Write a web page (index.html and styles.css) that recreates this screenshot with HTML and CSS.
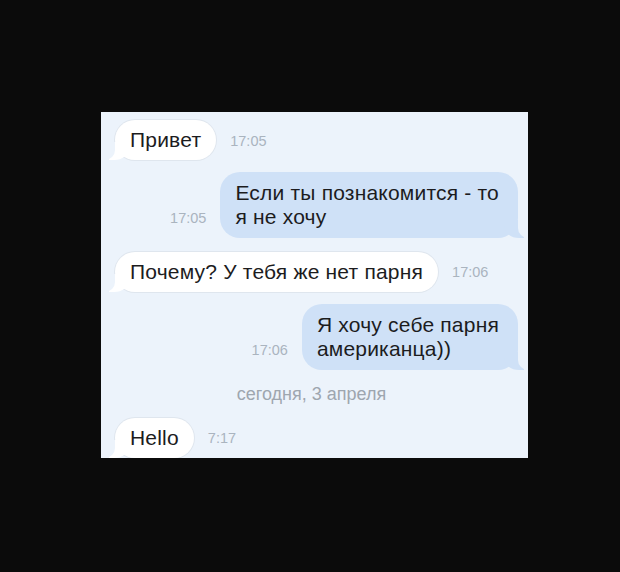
FILE: index.html
```html
<!DOCTYPE html>
<html lang="ru">
<head>
<meta charset="utf-8">
<link rel="stylesheet" href="styles.css">
</head>
<body>
<div class="stage">
  <div class="chat">
    <div class="row row-in r1">
      <div class="bubble in">Привет</div>
      <span class="time">17:05</span>
    </div>
    <div class="row row-out r2">
      <span class="time">17:05</span>
      <div class="bubble out">Если ты познакомится - то<br>я не хочу</div>
    </div>
    <div class="row row-in r3">
      <div class="bubble in">Почему? У тебя же нет парня</div>
      <span class="time">17:06</span>
    </div>
    <div class="row row-out r4">
      <span class="time">17:06</span>
      <div class="bubble out">Я хочу себе парня<br>американца))</div>
    </div>
    <div class="date">сегодня, 3 апреля</div>
    <div class="row row-in r5">
      <div class="bubble in">Hello</div>
      <span class="time">7:17</span>
    </div>
  </div>
</div>
</body>
</html>
```

FILE: styles.css
```css
html, body {
  margin: 0;
  padding: 0;
  background: #0b0b0b;
}
.stage {
  width: 620px;
  height: 572px;
  padding: 112px 0 0 101px;
  box-sizing: border-box;
}
.chat {
  width: 427px;
  height: 346px;
  background: #ecf3fb;
  overflow: hidden;
  box-sizing: border-box;
  padding: 8px 10px 0 14px;
  display: flex;
  flex-direction: column;
  font-family: "Liberation Sans", Arial, sans-serif;
}
.row {
  display: flex;
  align-items: flex-end;
  gap: 14px;
}
.row-out {
  justify-content: flex-end;
}
.r2 { margin-top: 12px; }
.r3 { margin-top: 14px; }
.r4 { margin-top: 12px; }
.r5 { margin-top: 14px; }
.bubble {
  position: relative;
  font-size: 21px;
  line-height: 24px;
  letter-spacing: 0.2px;
  color: #1c1c1e;
  padding: 8px 15px;
  border-radius: 20px;
}
.in {
  background: #ffffff;
  box-shadow: 0 0 0 1px #dfe6ee;
}
.out {
  background: #cfe1f7;
  padding: 9px 19px 9px 15px;
}
.in::before,
.in::after,
.out::before,
.out::after {
  content: "";
  position: absolute;
  bottom: 0;
  height: 18px;
}
.in::before {
  left: -6px;
  width: 20px;
  background: #ffffff;
  border-bottom-right-radius: 15px 12px;
}
.in::after {
  left: -10px;
  width: 10px;
  background: #ecf3fb;
  border-bottom-right-radius: 10px;
}
.out::before {
  right: -6px;
  width: 20px;
  background: #cfe1f7;
  border-bottom-left-radius: 15px 12px;
}
.out::after {
  right: -10px;
  width: 10px;
  background: #ecf3fb;
  border-bottom-left-radius: 10px;
}
.time {
  font-size: 14.5px;
  line-height: 16px;
  color: #aab4bf;
  margin-bottom: 12px;
}
.r1 .time { margin-bottom: 11px; }
.date {
  margin-top: 14px;
  text-align: center;
  font-size: 18px;
  line-height: 20px;
  color: #9ea6af;
  padding-right: 10px;
}
```
